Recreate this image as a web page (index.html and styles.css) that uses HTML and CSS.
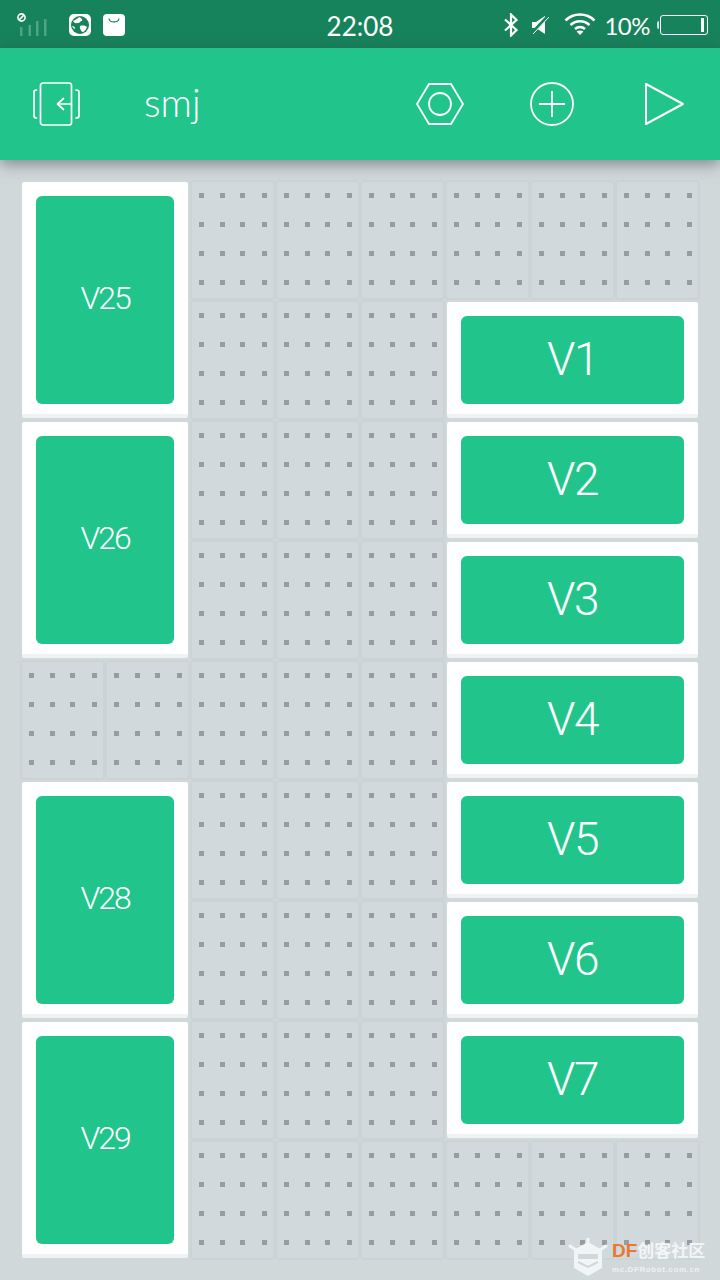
FILE: index.html
```html
<!DOCTYPE html>
<html lang="en">
<head>
<meta charset="utf-8">
<title>smj</title>
<link rel="stylesheet" href="styles.css">
</head>
<body>
<div class="status">
  <div class="status-left">
    <svg class="ic-signal" width="30" height="24" viewBox="0 0 30 24"><circle cx="4.500" cy="4.500" r="3.600" fill="none" stroke="#fff" stroke-width="1.600"/><path d="M2.100 6.900 6.900 2.100" stroke="#fff" stroke-width="1.600"/><g fill="#4fa486"><rect x="3" y="14" width="2.500" height="9"/><rect x="11.500" y="12" width="2.500" height="11"/><rect x="19" y="8" width="2.500" height="15"/><rect x="27" y="6" width="2.500" height="17"/></g></svg>
    <svg class="ic-app" width="22" height="22" viewBox="0 0 22 22"><rect width="22" height="22" rx="5" fill="#fff"/><circle cx="11" cy="11" r="9" fill="#17835c"/><path d="M4 7c3-1 4-3 7-4 1 2 3 2 2 4-2 0-2 2-4 2s-3 1-5-2zm7 5c3-1 6 0 7 1-1 3-3 5-5 5-1-2-3-4-2-6zM3 12c2 0 3 1 3 3-1 0-2-1-3-3z" fill="#fff"/></svg>
    <svg class="ic-app" width="22" height="22" viewBox="0 0 22 22"><rect width="22" height="22" rx="4" fill="#fff"/><path d="M6 4.500c.5 4.500 9.500 4.500 10 0" fill="none" stroke="#17835c" stroke-width="1.200"/></svg>
  </div>
  <div class="time">22:08</div>
  <div class="status-right">
    <svg class="ic-bt" width="16" height="24" viewBox="0 0 16 24"><path d="M2 6.500 13.500 17 8 22.500V1.500L13.500 7 2 17.500" fill="none" stroke="#fff" stroke-width="2.200"/></svg>
    <svg class="ic-mute" width="18" height="20" viewBox="0 0 18 20"><path d="M1 7h4l9-6v18l-9-6H1z" fill="#fff"/><path d="M0 19 17 1" stroke="#17835c" stroke-width="3"/><path d="M2 19 18 2" stroke="#fff" stroke-width="1"/></svg>
    <svg class="ic-wifi" width="32" height="24" viewBox="0 0 32 24"><g fill="none" stroke="#fff" stroke-width="2.600"><path d="M1.500 8.500c8-8 21-8 29 0"/><path d="M6.500 13c5.500-5 13.500-5 19 0"/><path d="M11 17c3-2.500 7-2.500 10 0"/></g><path d="M16 23l-3.500-3.500c2-1.500 5-1.500 7 0z" fill="#fff"/></svg>
    <span class="pct">10%</span>
    <div class="battery"><span class="battery-level"></span></div>
  </div>
</div>

<header class="bar">
  <svg class="ic-exit" width="47" height="44" viewBox="0 0 47 44"><g fill="none" stroke="#fff" stroke-width="1.700" stroke-linecap="round" stroke-linejoin="round"><rect x="7.500" y="1" width="31" height="42" rx="2.500"/><path d="M3.500 8C1.500 8 1 9 1 10v24c0 1 .5 2 2.500 2"/><path d="M43 8c2 0 3 1 3 2v24c0 1-1 2-3 2"/><path d="M38.500 22H25"/><path d="M30.500 16.500 24.500 22l6 5.500"/></g></svg>
  <div class="title">smj</div>
  <svg class="ic-hex" width="48" height="42" viewBox="0 0 48 42"><g fill="none" stroke="#fff" stroke-width="1.800"><path d="M13 1h22l12 20-12 20H13L1 21z"/><circle cx="24" cy="21" r="11"/></g></svg>
  <svg class="ic-plus" width="44" height="44" viewBox="0 0 44 44"><g fill="none" stroke="#fff" stroke-width="1.800"><circle cx="22" cy="22" r="21"/><path d="M9 22h26M22 9v26"/></g></svg>
  <svg class="ic-play" width="40" height="44" viewBox="0 0 40 44"><path d="M2 2v40l37-20z" fill="none" stroke="#fff" stroke-width="2" stroke-linejoin="round"/></svg>
</header>

<main class="board">
  <div class="widget w-tall"><div class="btn btn-s">V25</div></div>
  <div class="tile"></div><div class="tile"></div><div class="tile"></div><div class="tile"></div><div class="tile"></div><div class="tile"></div>
  <div class="tile"></div><div class="tile"></div><div class="tile"></div>
  <div class="widget w-wide"><div class="btn">V1</div></div>

  <div class="widget w-tall"><div class="btn btn-s">V26</div></div>
  <div class="tile"></div><div class="tile"></div><div class="tile"></div>
  <div class="widget w-wide"><div class="btn">V2</div></div>
  <div class="tile"></div><div class="tile"></div><div class="tile"></div>
  <div class="widget w-wide"><div class="btn">V3</div></div>

  <div class="tile"></div><div class="tile"></div><div class="tile"></div><div class="tile"></div><div class="tile"></div>
  <div class="widget w-wide"><div class="btn">V4</div></div>

  <div class="widget w-tall"><div class="btn btn-s">V28</div></div>
  <div class="tile"></div><div class="tile"></div><div class="tile"></div>
  <div class="widget w-wide"><div class="btn">V5</div></div>
  <div class="tile"></div><div class="tile"></div><div class="tile"></div>
  <div class="widget w-wide"><div class="btn">V6</div></div>

  <div class="widget w-tall"><div class="btn btn-s">V29</div></div>
  <div class="tile"></div><div class="tile"></div><div class="tile"></div>
  <div class="widget w-wide"><div class="btn">V7</div></div>
  <div class="tile"></div><div class="tile"></div><div class="tile"></div><div class="tile"></div><div class="tile"></div><div class="tile"></div>
</main>

<div class="watermark">
  <svg class="wm-logo" width="40" height="38" viewBox="0 0 40 38"><path d="M20 0v5M2 8l6 4M38 8l-6 4" stroke="#f2f5f6" stroke-width="3" stroke-linecap="round"/><path d="M20 4 34 12v18l-14 8-14-8V12z" fill="#f2f5f6"/><path d="M10 16h20v5H10z" fill="#d0d8da"/><path d="M10 24l10 5 10-5" fill="none" stroke="#d0d8da" stroke-width="2"/></svg>
  <div class="wm-text">
    <div class="wm-top"><span class="wm-df">DF</span>创客社区</div>
    <div class="wm-url">mc.DFRobot.com.cn</div>
  </div>
</div>
</body>
</html>
```
FILE: styles.css
```css
* { box-sizing: border-box; }
html, body { margin: 0; padding: 0; }
body {
  width: 720px;
  height: 1280px;
  overflow: hidden;
  position: relative;
  background: #d0d8da;
  font-family: Roboto, "Noto Sans", sans-serif;
  color: #fff;
}

.status {
  height: 48px;
  background: #17835c;
  display: grid;
  grid-template-columns: 1fr auto 1fr;
  align-items: center;
}
.status-left { display: flex; align-items: center; padding-left: 17px; }
.ic-app { margin-left: 12px; }
.ic-signal + .ic-app { margin-left: 22px; }
.time { font-family: Lato, sans-serif; font-size: 26px; font-weight: 400; line-height: 48px; padding-top: 2px; }
.status-right { display: flex; align-items: center; justify-content: flex-end; padding-right: 12px; }
.ic-mute { margin-left: 12px; }
.ic-wifi { margin-left: 15px; margin-top: -2px; }
.pct { font-family: Lato, sans-serif; font-size: 24px; margin-left: 8px; letter-spacing: -0.5px; }
.battery {
  width: 48px;
  height: 20px;
  margin-left: 10px;
  border: 1px solid #fff;
  border-radius: 3px;
  display: flex;
  justify-content: flex-end;
  align-items: center;
  padding-right: 3px;
  position: relative;
}
.battery::before {
  content: "";
  position: absolute;
  left: -4px;
  top: 5px;
  width: 2px;
  height: 8px;
  background: #cfe6dd;
  border-radius: 2px 0 0 2px;
}
.battery-level { width: 3px; height: 14px; background: #fff; }

.bar {
  height: 112px;
  background: #21c58b;
  display: flex;
  align-items: center;
  padding: 0 36px 0 33px;
  box-shadow: 0 4px 14px rgba(50, 55, 60, 0.5);
  position: relative;
  z-index: 2;
}
.title { font-family: Lato, sans-serif; font-weight: 300; font-size: 39px; line-height: 44px; margin-left: 64px; margin-right: auto; padding-bottom: 4px; }
.ic-plus { margin-left: 66px; }
.ic-play { margin-left: 70px; }

.board {
  display: grid;
  grid-template-columns: repeat(8, 81px);
  grid-auto-rows: 116px;
  gap: 4px;
  margin: 22px 0 0 22px;
}
.tile {
  background-color: #d2d9dd;
  box-shadow: 0 0 0 2px #cad3d6;
  border-radius: 2px;
  background-image:
    conic-gradient(at 5px 5px, transparent 270deg, #969da0 0),
    conic-gradient(at 5px 5px, transparent 270deg, #969da0 0),
    conic-gradient(at 5px 5px, transparent 270deg, #969da0 0),
    conic-gradient(at 5px 5px, transparent 270deg, #969da0 0);
  background-size: 5px 29px;
  background-repeat: repeat-y;
  background-position: 7px 11px, 28px 11px, 48px 11px, 70px 11px;
}
.widget {
  background: #fff;
  border-bottom: 4px solid #f0f3f4;
  border-radius: 2px;
  padding: 14px 14px 10px;
  display: flex;
  position: relative;
  z-index: 1;
}
.w-tall { grid-column: 1 / span 2; grid-row: span 2; }
.w-wide { grid-column: 6 / span 3; }
.btn {
  flex: 1;
  background: #21c58b;
  border-radius: 6px;
  display: flex;
  align-items: center;
  justify-content: center;
  font-weight: 300;
  font-size: 46px;
  letter-spacing: -1.500px;
  padding-bottom: 3px;
}
.btn-s { font-size: 32px; letter-spacing: -2px; padding-bottom: 4px; }

.watermark {
  position: absolute;
  left: 568px;
  top: 1238px;
  display: flex;
  gap: 4px;
  align-items: flex-start;
  z-index: 3;
}
.wm-text { display: flex; flex-direction: column; margin-top: 2px; }
.wm-top { font-family: "Noto Sans CJK SC", "Noto Sans", sans-serif; font-size: 17px; font-weight: 700; line-height: 20px; color: #f2f5f6; white-space: nowrap; }
.wm-df { color: #e8792f; font-family: "Liberation Sans", sans-serif; font-size: 19px; }
.wm-url { font-family: "Liberation Sans", sans-serif; font-size: 8px; font-weight: 700; letter-spacing: 0.6px; line-height: 12px; color: #eef1f2; margin-top: 3px; white-space: nowrap; }
```
